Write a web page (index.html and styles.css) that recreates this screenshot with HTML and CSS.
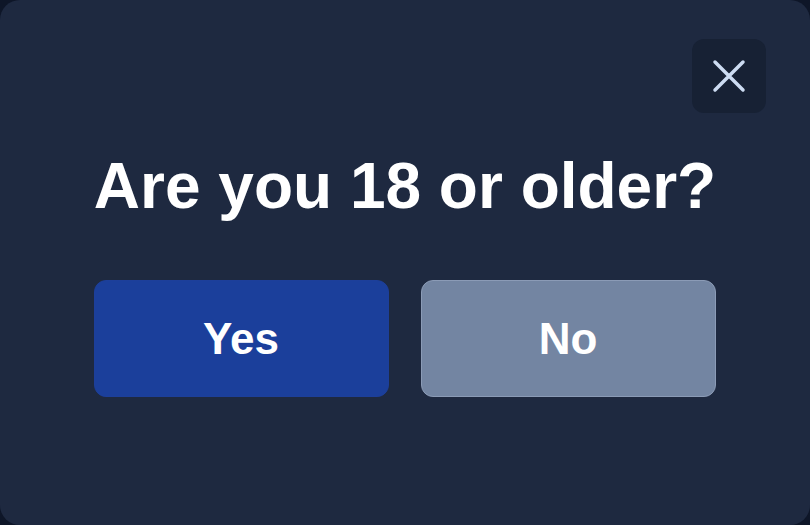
FILE: index.html
```html
<!DOCTYPE html>
<html lang="en">
<head>
    <meta charset="UTF-8">
    <meta name="viewport" content="width=device-width, initial-scale=1.0">
    <title>Age Check</title>
    <link rel="stylesheet" href="styles.css">
</head>
<body>
    <div class="modal">
        <button type="button" class="close-button" aria-label="Close">
            <svg width="34" height="34" viewBox="0 0 34 34" fill="none">
                <path d="M3 3 L31 31 M31 3 L3 31" stroke="#cddcf2" stroke-width="3.5" stroke-linecap="round"/>
            </svg>
        </button>
        <h2 class="question">Are you 18 or older?</h2>
        <div class="actions">
            <button type="button" class="answer yes">Yes</button>
            <button type="button" class="answer no">No</button>
        </div>
    </div>
</body>
</html>
```

FILE: styles.css
```css
:root {
    --page-bg: #0e1628;
    --modal-bg: #1e2940;
    --close-bg: #172134;
    --yes-color: #1b3f9b;
    --no-color: #7385a2;
    --text-color: #ffffff;
}

* {
    box-sizing: border-box;
    margin: 0;
    padding: 0;
}

body {
    font-family: 'Liberation Sans', Arial, sans-serif;
    background-color: var(--page-bg);
    width: 810px;
    height: 525px;
    overflow: hidden;
}

.modal {
    position: relative;
    width: 810px;
    height: 525px;
    background-color: var(--modal-bg);
    border-radius: 20px;
    display: flex;
    flex-direction: column;
    align-items: center;
    padding-top: 146px;
}

.close-button {
    position: absolute;
    top: 39px;
    right: 44px;
    width: 74px;
    height: 74px;
    border: none;
    border-radius: 12px;
    background-color: var(--close-bg);
    display: flex;
    align-items: center;
    justify-content: center;
    cursor: pointer;
}

.question {
    color: var(--text-color);
    font-size: 64px;
    font-weight: 700;
    line-height: 80px;
}

.actions {
    display: flex;
    gap: 32px;
    margin-top: 54px;
    padding-right: 1px;
}

.answer {
    width: 295px;
    height: 117px;
    border-radius: 12px;
    color: var(--text-color);
    font-family: 'Liberation Sans', Arial, sans-serif;
    font-size: 44px;
    font-weight: 700;
    cursor: pointer;
}

.yes {
    background-color: var(--yes-color);
    border: 1px solid #1d3f9a;
}

.no {
    background-color: var(--no-color);
    border: 1px solid #8b9bb6;
}
```
